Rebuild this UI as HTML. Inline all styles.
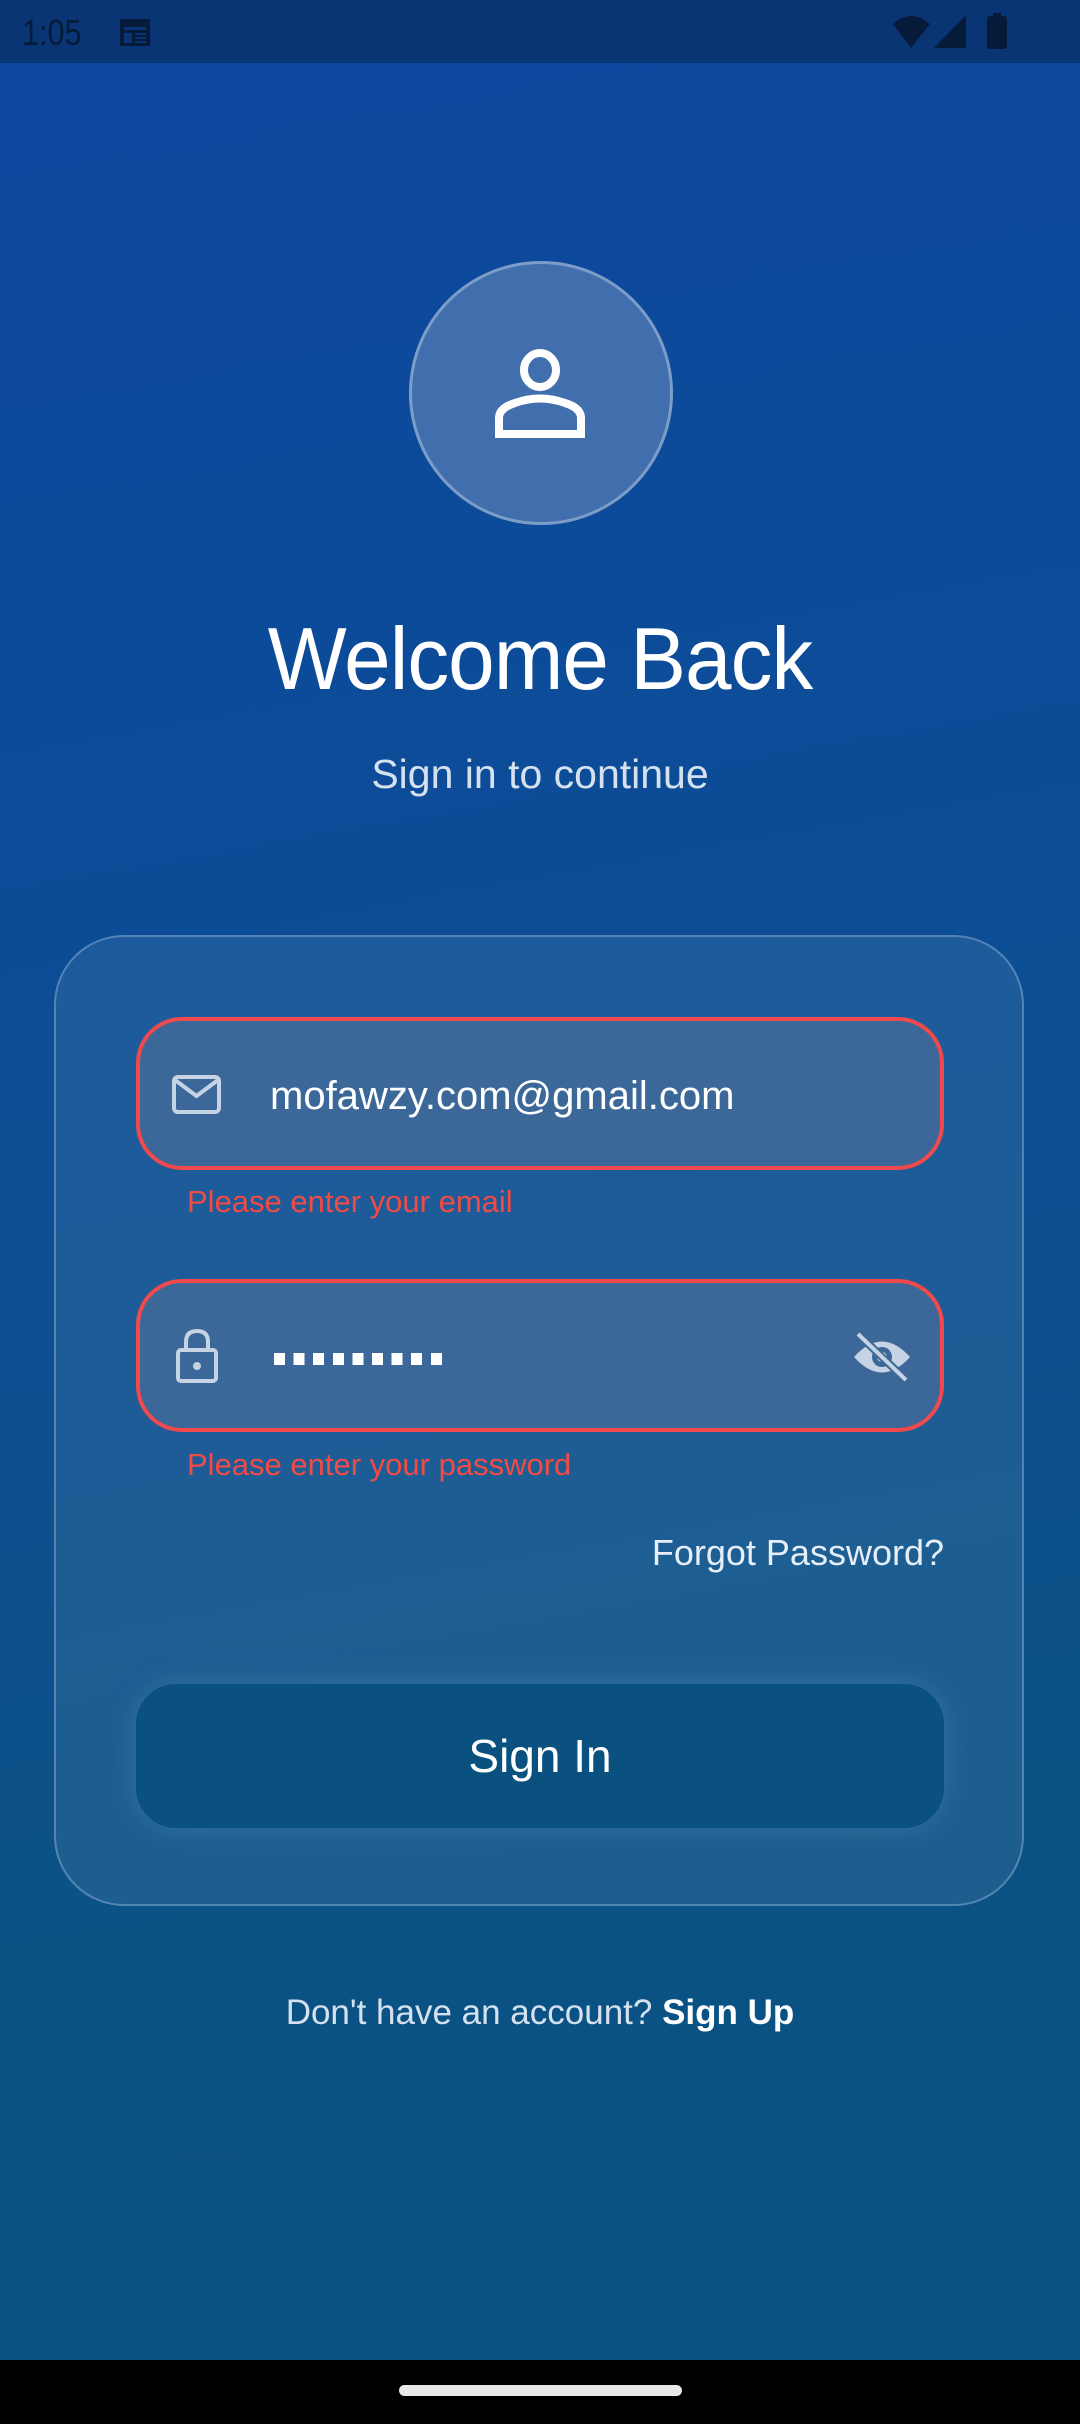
<!DOCTYPE html>
<html><head><meta charset="utf-8">
<style>
html,body{margin:0;padding:0;}
body{width:1080px;height:2424px;position:relative;overflow:hidden;font-family:"Liberation Sans",sans-serif;
background:linear-gradient(170deg,#0d479f 0%,#0c4d96 40%,#0b5285 75%,#0a5380 100%);}
.abs{position:absolute;}
.status{left:0;top:0;width:1080px;height:63px;background:#0a3575;}
.nav{left:0;top:2360px;width:1080px;height:64px;background:#000;}
.handle{left:399px;top:2385px;width:283px;height:11px;border-radius:6px;background:#e8e8e8;}
.circle{left:409px;top:261px;width:258px;height:258px;border-radius:50%;background:#416fae;border:3px solid #7d9dc8;}
.title{left:0;width:1080px;text-align:center;color:#fff;}
.card{left:54px;top:935px;width:970px;height:971px;border-radius:70px;background:rgba(80,130,175,0.26);border:2px solid rgba(150,185,220,0.45);box-sizing:border-box;}
.field{left:136px;width:808px;height:153px;border-radius:46px;border:4px solid #f04a4c;background:#3b6898;box-sizing:border-box;}
.err{left:187px;color:#f24a44;font-size:31px;}
.btn{left:136px;top:1684px;width:808px;height:144px;border-radius:40px;background:#0a5180;color:#fff;text-align:center;line-height:144px;font-size:46px;box-shadow:0 0 30px rgba(120,170,210,0.25);}
</style></head><body>
<div class="abs status">
  <div class="abs" style="left:22px;top:12px;font-size:36px;color:#061a3a;transform:scaleX(0.85);transform-origin:left;">1:05</div>
  <svg class="abs" style="left:118px;top:16px" width="36" height="32" viewBox="0 0 36 32"><rect x="2" y="3" width="30" height="27" fill="#061a3a"/><rect x="6" y="11" width="22" height="3" fill="#0a3575"/><rect x="6" y="17" width="8" height="10" fill="#0a3575"/><rect x="17" y="17" width="11" height="2" fill="#0a3575"/><rect x="17" y="21" width="11" height="2" fill="#0a3575"/><rect x="17" y="25" width="11" height="2" fill="#0a3575"/></svg>
  <svg class="abs" style="left:890px;top:12px" width="125" height="40" viewBox="0 0 125 40"><path d="M3 12 Q21 -4 40 12 L21 36 Z" fill="#061a3a"/><path d="M44 36 L76 3 L76 36 Z" fill="#061a3a"/><rect x="97" y="4" width="20" height="33" rx="3" fill="#061a3a"/><rect x="103" y="1" width="8" height="5" fill="#061a3a"/></svg>
</div>

<div class="abs circle"></div>
<svg class="abs" style="left:490px;top:346px" width="100" height="100" viewBox="0 0 100 100">
  <ellipse cx="50" cy="24" rx="16" ry="17" fill="none" stroke="#fff" stroke-width="8"/>
  <path d="M9 88 V72 Q9 62 25 57 Q50 48 75 57 Q91 62 91 72 V88 Z" fill="none" stroke="#fff" stroke-width="8"/>
</svg>

<div class="abs title" style="top:608px;font-size:88px;letter-spacing:-1px;transform:scaleX(0.95);">Welcome Back</div>
<div class="abs title" style="top:751px;font-size:41px;color:#d5e1ef;">Sign in to continue</div>

<div class="abs card"></div>

<div class="abs field" style="top:1017px;"></div>
<svg class="abs" style="left:171px;top:1074px" width="52" height="42" viewBox="0 0 52 42"><rect x="3" y="3" width="45" height="35" rx="4" fill="none" stroke="#c5d3e4" stroke-width="4"/><path d="M4 6 L25.5 22 L47 6" fill="none" stroke="#c5d3e4" stroke-width="4"/></svg>
<div class="abs" style="left:270px;top:1074px;font-size:40px;color:#fff;">mofawzy.com@gmail.com</div>
<div class="abs err" style="top:1184px;">Please enter your email</div>

<div class="abs field" style="top:1279px;"></div>
<svg class="abs" style="left:175px;top:1328px" width="44" height="56" viewBox="0 0 44 56"><path d="M11 22 V14 Q11 3 22 3 Q33 3 33 14 V22" fill="none" stroke="#c5d3e4" stroke-width="4"/><rect x="3" y="22" width="38" height="31" rx="3" fill="none" stroke="#c5d3e4" stroke-width="4"/><circle cx="22" cy="38" r="4" fill="#c5d3e4"/></svg>
<div class="abs" style="left:274px;top:1353px;width:175px;height:12px;background:repeating-linear-gradient(90deg,#fff 0 11px,transparent 11px 19.6px);"></div>
<svg class="abs" style="left:850px;top:1330px" width="64" height="54" viewBox="0 0 64 54"><path d="M4 27 Q32 -4 60 27 Q32 58 4 27 Z" fill="#c5d3e4"/><circle cx="32" cy="27" r="10" fill="#3b6898"/><circle cx="32" cy="27" r="5" fill="#c5d3e4"/><path d="M8 4 L56 50" stroke="#3b6898" stroke-width="8"/><path d="M8 4 L56 50" stroke="#c5d3e4" stroke-width="4"/></svg>
<div class="abs err" style="top:1447px;">Please enter your password</div>

<div class="abs" style="left:600px;width:344px;text-align:right;top:1532px;font-size:36px;color:#e6eef7;">Forgot Password?</div>

<div class="abs btn">Sign In</div>

<div class="abs title" style="top:1993px;font-size:35px;color:#d5e1ef;">Don't have an account? <span style="color:#fff;font-weight:bold;">Sign Up</span></div>

<div class="abs nav"></div>
<div class="abs handle"></div>
</body></html>
